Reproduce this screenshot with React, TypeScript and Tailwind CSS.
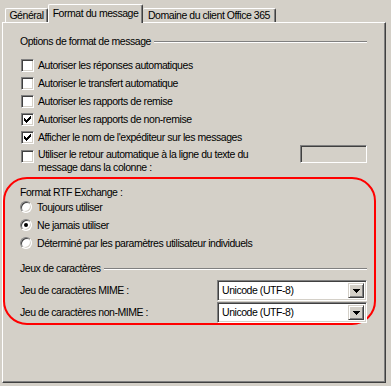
function CheckBox({ checked }: { checked?: boolean }) {
  return (
    <span className="w-[13px] h-[13px] shrink-0 flex items-center justify-center bg-white border border-t-[#808080] border-l-[#808080] border-b-white border-r-white shadow-[inset_1px_1px_0_#404040,inset_-1px_-1px_0_#d4d0c8]">
      {checked && (
        <svg width="7" height="7" viewBox="0 0 7 7" shapeRendering="crispEdges">
          <path
            d="M0 2h1v3h-1z M1 3h1v3h-1z M2 4h1v3h-1z M3 3h1v3h-1z M4 2h1v3h-1z M5 1h1v3h-1z M6 0h1v3h-1z"
            fill="#000"
          />
        </svg>
      )}
    </span>
  );
}

function Radio({ checked }: { checked?: boolean }) {
  return (
    <span className="w-[12px] h-[12px] shrink-0 rounded-full flex items-center justify-center bg-white border border-t-[#808080] border-l-[#808080] border-b-white border-r-white shadow-[inset_1px_1px_0_#404040,inset_-1px_-1px_0_#d4d0c8]">
      {checked && <span className="w-[4px] h-[4px] rounded-full bg-black" />}
    </span>
  );
}

function GroupHeader({ label }: { label: string }) {
  return (
    <div className="flex items-center h-[13px]">
      <span>{label}</span>
      <span className="flex-1 ml-[3px] h-[2px] border-t border-t-[#808080] border-b border-b-white" />
    </div>
  );
}

function Combo({ value }: { value: string }) {
  return (
    <div className="w-[150px] h-[21px] flex items-center bg-white border border-t-[#808080] border-l-[#808080] border-b-white border-r-white shadow-[inset_1px_1px_0_#404040,inset_-1px_-1px_0_#d4d0c8] p-[2px]">
      <span className="flex-1 pl-[2px]">{value}</span>
      <span className="w-[16px] h-[15px] flex items-center justify-center bg-[#d4d0c8] border border-t-[#d4d0c8] border-l-[#d4d0c8] border-b-[#404040] border-r-[#404040] shadow-[inset_1px_1px_0_#fff,inset_-1px_-1px_0_#808080]">
        <svg width="7" height="4" viewBox="0 0 7 4" shapeRendering="crispEdges">
          <path d="M0 0h7v1h-1v1h-1v1h-1v1h-1v-1h-1v-1h-1v-1h-1z" fill="#000" />
        </svg>
      </span>
    </div>
  );
}

export default function App() {
  const options = [
    { label: "Autoriser les réponses automatiques", checked: false },
    { label: "Autoriser le transfert automatique", checked: false },
    { label: "Autoriser les rapports de remise", checked: false },
    { label: "Autoriser les rapports de non-remise", checked: true },
    { label: "Afficher le nom de l'expéditeur sur les messages", checked: true },
  ];

  return (
    <div className="w-[391px] h-[386px] overflow-hidden bg-[#d4d0c8] text-black text-[10.5px] tracking-[-0.45px] leading-[13px] font-['Liberation_Sans',Arial,sans-serif]">
      <div className="ml-[2px]">

        {/* Tabs */}
        <div className="flex items-end h-[22px] pl-[3px]">
          <div className="w-[43px] h-[14px] flex items-center justify-center rounded-t-[2px] border-l border-t border-white border-r border-r-[#404040] shadow-[inset_-1px_0_0_#808080]">
            Général
          </div>
          <div className="relative z-10 -mb-px w-[95px] h-[19px] pb-[2px] flex items-center justify-center bg-[#d4d0c8] rounded-t-[2px] border-l border-t border-white border-r border-r-[#404040] shadow-[inset_-1px_0_0_#808080]">
            Format du message
          </div>
          <div className="w-[133px] h-[14px] flex items-center justify-center rounded-t-[2px] border-t border-white border-r border-r-[#404040] shadow-[inset_-1px_0_0_#808080]">
            Domaine du client Office 365
          </div>
        </div>

        {/* Panel */}
        <div className="w-[384px] h-[361px] border-l border-t border-white border-r border-b border-r-[#404040] border-b-[#404040] shadow-[inset_-1px_-1px_0_#808080] pl-[17px] pr-[18px] pt-[12px]">
          <GroupHeader label="Options de format de message" />

          <div className="mt-[8px] flex flex-col">
            {options.map((o) => (
              <label key={o.label} className="flex items-center gap-[4px] h-[18px] pl-[1px]">
                <CheckBox checked={o.checked} />
                <span>{o.label}</span>
              </label>
            ))}
            <div className="flex items-start mt-[2px] pl-[1px]">
              <span className="mt-[2px]">
                <CheckBox />
              </span>
              <span className="ml-[4px]">
                Utiliser le retour automatique à la ligne du texte du
                <br />
                message dans la colonne :
              </span>
              <span className="ml-auto -mt-[3px] w-[67px] h-[18px] bg-[#d4d0c8] border border-t-[#808080] border-l-[#808080] border-b-white border-r-white shadow-[inset_1px_1px_0_#404040,inset_-1px_-1px_0_#d4d0c8]" />
            </div>
          </div>

          {/* Highlighted section */}
          <div className="mt-[3px] -ml-[17px] w-[373px] border-2 border-[#ff0000] rounded-[24px] pl-[15px] pr-[7px] pt-[7px]">
            <div className="h-[12px]">Format RTF Exchange :</div>
            <div className="flex flex-col">
              <label className="flex items-center gap-[5px] h-[18px]">
                <Radio />
                <span>Toujours utiliser</span>
              </label>
              <label className="flex items-center gap-[5px] h-[18px]">
                <Radio checked />
                <span>Ne jamais utiliser</span>
              </label>
              <label className="flex items-center gap-[5px] h-[18px]">
                <Radio />
                <span>Déterminé par les paramètres utilisateur individuels</span>
              </label>
            </div>

            <div className="mt-[10px]">
              <GroupHeader label="Jeux de caractères" />
            </div>

            <div className="mt-[5px] flex items-center justify-between h-[21px]">
              <span>Jeu de caractères MIME :</span>
              <Combo value="Unicode (UTF-8)" />
            </div>
            <div className="mt-[1px] flex items-center justify-between h-[21px]">
              <span>Jeu de caractères non-MIME :</span>
              <Combo value="Unicode (UTF-8)" />
            </div>
          </div>
        </div>
      </div>
    </div>
  );
}
